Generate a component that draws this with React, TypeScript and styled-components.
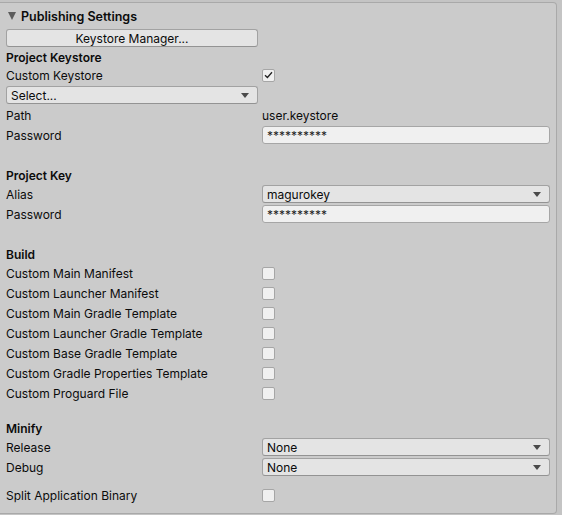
import React from "react";
import styled, { createGlobalStyle } from "styled-components";

const Global = createGlobalStyle`
  html, body { margin: 0; padding: 0; background: #c4c4c4; }
  body { font-family: Inter, "Noto Sans", sans-serif; font-size: 12px; color: #0b0b0b; }
  * { box-sizing: border-box; }
`;

const Panel = styled.div`
  margin-top: 2px;
  width: 557px;
  height: 512px;
  background: #cbcbcb;
  border-top: 1px solid #a9a9a9;
  border-right: 1px solid #a9a9a9;
  border-bottom: 1px solid #a9a9a9;
  border-radius: 0 4px 4px 0;
  display: flex;
  flex-direction: column;
`;

const Header = styled.div`
  height: 26px;
  display: flex;
  align-items: center;
  gap: 5px;
  padding-left: 8px;
  font-weight: 600;
  font-size: 12.5px;
`;

const Foldout = styled.span`
  width: 0;
  height: 0;
  border-left: 4.5px solid transparent;
  border-right: 4.5px solid transparent;
  border-top: 8px solid #5b5b5b;
`;

const Body = styled.div`
  padding: 0 6px;
  display: flex;
  flex-direction: column;
`;

const WideButton = styled.button`
  width: 252px;
  height: 18px;
  margin: 0;
  padding: 0;
  background: #e4e4e4;
  border: 1px solid #a2a2a2;
  border-bottom-color: #939393;
  border-radius: 3px;
  font: inherit;
  color: #0b0b0b;
  text-align: center;
`;

const SectionTitle = styled.div<{ $top?: number }>`
  height: 18px;
  margin-top: ${(p) => p.$top ?? 0}px;
  display: flex;
  align-items: center;
  font-weight: 600;
`;

const Row = styled.div<{ $top?: number }>`
  height: 18px;
  margin-top: ${(p) => p.$top ?? 2}px;
  display: grid;
  grid-template-columns: 256px 1fr;
  align-items: center;
`;

const Label = styled.span`
  white-space: nowrap;
`;

const Value = styled.span``;

const Check = styled.span`
  width: 13px;
  height: 13px;
  background: #f0f0f0;
  border: 1px solid #a6a6a6;
  border-radius: 2px;
  display: flex;
  align-items: center;
  justify-content: center;
`;

const TextField = styled.div`
  height: 18px;
  background: #f0f0f0;
  border: 1px solid #a6a6a6;
  border-radius: 3px;
  padding: 0 4px;
  display: flex;
  align-items: center;
  font-size: 12px;
  color: #222;
`;

const Dropdown = styled.div<{ $width?: number }>`
  height: 18px;
  ${(p) => (p.$width ? `width: ${p.$width}px;` : "")}
  background: #e4e4e4;
  border: 1px solid #a2a2a2;
  border-bottom-color: #939393;
  border-radius: 3px;
  padding: 0 8px 0 4px;
  display: flex;
  align-items: center;
  justify-content: space-between;
`;

const Arrow = styled.span`
  width: 0;
  height: 0;
  border-left: 4px solid transparent;
  border-right: 4px solid transparent;
  border-top: 5px solid #4a4a4a;
`;

const CheckBox = ({ checked }: { checked?: boolean }) => (
  <Check>
    {checked && (
      <svg width="9" height="8" viewBox="0 0 9 8">
        <polyline points="1,4.2 3.4,6.5 8,1.3" fill="none" stroke="#222" strokeWidth="1.3" />
      </svg>
    )}
  </Check>
);

const Select = ({ value, width }: { value: string; width?: number }) => (
  <Dropdown $width={width}>
    <span>{value}</span>
    <Arrow />
  </Dropdown>
);

const buildRows = [
  "Custom Main Manifest",
  "Custom Launcher Manifest",
  "Custom Main Gradle Template",
  "Custom Launcher Gradle Template",
  "Custom Base Gradle Template",
  "Custom Gradle Properties Template",
  "Custom Proguard File",
];

export default function App() {
  return (
    <>
      <Global />
      <Panel>
        <Header>
          <Foldout />
          Publishing Settings
        </Header>
        <Body>
          <WideButton>Keystore Manager...</WideButton>
          <SectionTitle $top={1}>Project Keystore</SectionTitle>
          <Row $top={0}>
            <Label>Custom Keystore</Label>
            <CheckBox checked />
          </Row>
          <Row>
            <Select value="Select..." width={252} />
          </Row>
          <Row>
            <Label>Path</Label>
            <Value>user.keystore</Value>
          </Row>
          <Row>
            <Label>Password</Label>
            <TextField>**********</TextField>
          </Row>

          <SectionTitle $top={22}>Project Key</SectionTitle>
          <Row $top={1}>
            <Label>Alias</Label>
            <Select value="magurokey" />
          </Row>
          <Row>
            <Label>Password</Label>
            <TextField>**********</TextField>
          </Row>

          <SectionTitle $top={22}>Build</SectionTitle>
          {buildRows.map((r, i) => (
            <Row key={r} $top={i === 0 ? 1 : 2}>
              <Label>{r}</Label>
              <CheckBox />
            </Row>
          ))}

          <SectionTitle $top={17}>Minify</SectionTitle>
          <Row $top={1}>
            <Label>Release</Label>
            <Select value="None" />
          </Row>
          <Row>
            <Label>Debug</Label>
            <Select value="None" />
          </Row>
          <Row $top={10}>
            <Label>Split Application Binary</Label>
            <CheckBox />
          </Row>
        </Body>
      </Panel>
    </>
  );
}
